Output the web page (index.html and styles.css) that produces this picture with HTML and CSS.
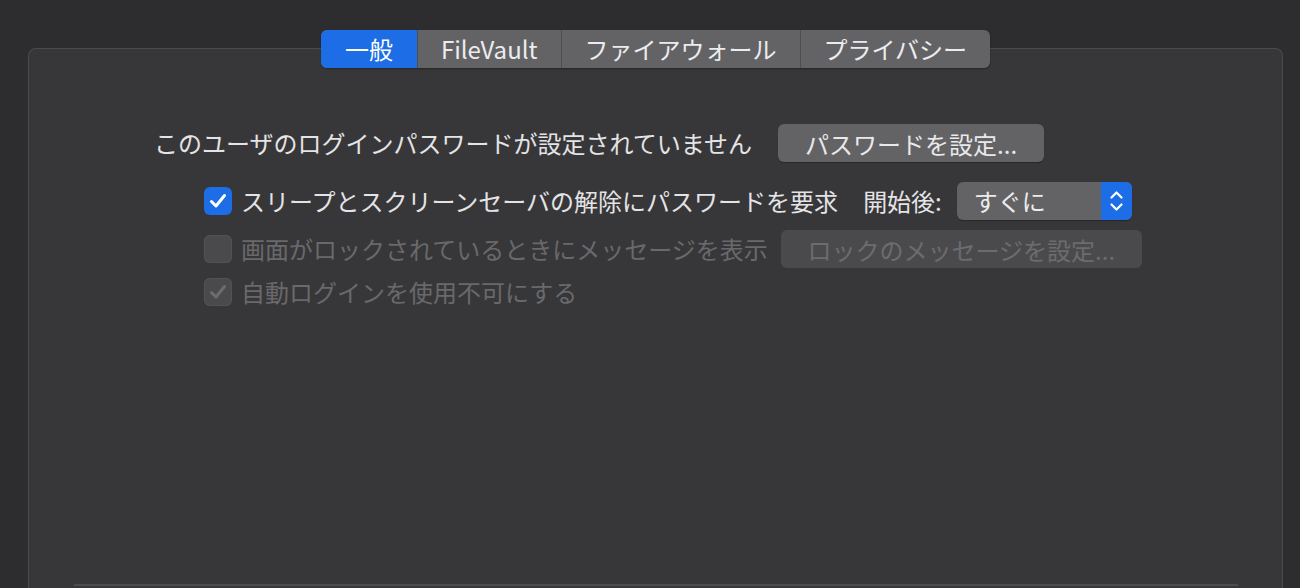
FILE: index.html
```html
<!DOCTYPE html>
<html lang="ja">
<head>
    <meta charset="UTF-8">
    <title>セキュリティとプライバシー</title>
    <link rel="stylesheet" href="styles.css">
</head>
<body>
    <div class="window">
        <div class="tabs">
            <div class="tab active">一般</div>
            <div class="tab">FileVault</div>
            <div class="tab">ファイアウォール</div>
            <div class="tab">プライバシー</div>
        </div>

        <div class="panel">
            <div class="row row-password">
                <span class="label">このユーザのログインパスワードが設定されていません</span>
                <button class="btn btn-password">パスワードを設定...</button>
            </div>

            <div class="row row-check">
                <span class="check checked">
                    <svg viewBox="0 0 28 28" width="28" height="28"><path d="M7.5 14.5 L12 19 L20.5 8.5" fill="none" stroke="#fff" stroke-width="3" stroke-linecap="round" stroke-linejoin="round"/></svg>
                </span>
                <span class="label check-label">スリープとスクリーンセーバの解除にパスワードを要求</span>
                <span class="label after-label">開始後:</span>
                <div class="popup">
                    <span class="popup-value">すぐに</span>
                    <span class="stepper">
                        <svg viewBox="0 0 31 38" width="31" height="38"><path d="M10.5 15.5 L15.5 10.5 L20.5 15.5 M10.5 22.5 L15.5 27.5 L20.5 22.5" fill="none" stroke="#fff" stroke-width="2.2" stroke-linecap="round" stroke-linejoin="round"/></svg>
                    </span>
                </div>
            </div>

            <div class="row row-check disabled">
                <span class="check"></span>
                <span class="label check-label">画面がロックされているときにメッセージを表示</span>
                <button class="btn btn-message" disabled>ロックのメッセージを設定...</button>
            </div>

            <div class="row row-check disabled row-last">
                <span class="check">
                    <svg viewBox="0 0 28 28" width="28" height="28"><path d="M7.5 14.5 L12 19 L20.5 8.5" fill="none" stroke="#6c6c6e" stroke-width="3" stroke-linecap="round" stroke-linejoin="round"/></svg>
                </span>
                <span class="label check-label">自動ログインを使用不可にする</span>
            </div>

            <div class="bottom-box"></div>
        </div>
    </div>
</body>
</html>
```

FILE: styles.css
```css
* {
    margin: 0;
    padding: 0;
    box-sizing: border-box;
}

body {
    font-family: 'Noto Sans CJK JP', 'Noto Sans', sans-serif;
    background: #2d2d2f;
    color: #e4e4e6;
    height: 588px;
    overflow: hidden;
}

.window {
    padding-top: 30px;
    padding-left: 28px;
    width: 1283px;
}

.tabs {
    display: flex;
    width: max-content;
    margin: 0 auto;
    height: 38px;
    border-radius: 6px;
    background: #636366;
    box-shadow: 0 1px 2px rgba(0,0,0,0.35);
    position: relative;
    z-index: 1;
    overflow: hidden;
}

.tab {
    padding: 0 23px;
    font-size: 24px;
    line-height: 38px;
    color: #ececee;
    border-left: 1px solid #4e4e50;
}

.tab:first-child {
    border-left: none;
    width: 96px;
    padding: 0;
    text-align: center;
}

.tab.active {
    background: #1c6de6;
    color: #fff;
}

.panel {
    margin-top: -20px;
    height: 560px;
    background: #373739;
    border: 1px solid #4b4b4d;
    border-bottom: none;
    border-radius: 8px 8px 0 0;
    padding: 75px 0 0 125px;
}

.row {
    display: flex;
    align-items: center;
    font-size: 24px;
    height: 38px;
}

.row-password {
    gap: 26px;
}

.row-check {
    padding-left: 50px;
}

.row-password + .row-check {
    margin-top: 20px;
}

.row-check + .row-check {
    margin-top: 10px;
}

.row-check + .row-last {
    margin-top: 5px;
}

.label {
    white-space: nowrap;
    line-height: 38px;
}

.check-label {
    margin-left: 9px;
}

.after-label {
    margin-left: 25px;
}

.check {
    width: 28px;
    height: 28px;
    border-radius: 6px;
    background: #4a4a4c;
    box-shadow: inset 0 0 0 1px #525254;
    flex-shrink: 0;
}

.check svg {
    display: block;
}

.check.checked {
    background: #1c6de6;
    box-shadow: none;
}

.disabled .label {
    color: #69696b;
}

.btn {
    font-family: inherit;
    font-size: 24px;
    height: 38px;
    border: none;
    border-radius: 6px;
    background: #636366;
    color: #e9e9eb;
    box-shadow: 0 1px 1px rgba(0,0,0,0.3);
}

.btn-password {
    width: 266px;
}

.btn-message {
    width: 361px;
    margin-left: 13px;
    background: #4a4a4c;
    color: #6c6c6e;
    box-shadow: none;
}

.popup {
    display: flex;
    margin-left: 15px;
    width: 175px;
    height: 38px;
    border-radius: 6px;
    background: #636366;
    overflow: hidden;
    box-shadow: 0 1px 1px rgba(0,0,0,0.3);
}

.popup-value {
    flex: 1;
    padding-left: 17px;
    line-height: 38px;
    color: #ececee;
}

.stepper {
    width: 31px;
    background: #1c6de6;
}

.stepper svg {
    display: block;
}

.bottom-box {
    margin: 273px 0 0 -80px;
    width: 1164px;
    height: 10px;
    border-top: 2px solid #4c4c4e;
}
```
